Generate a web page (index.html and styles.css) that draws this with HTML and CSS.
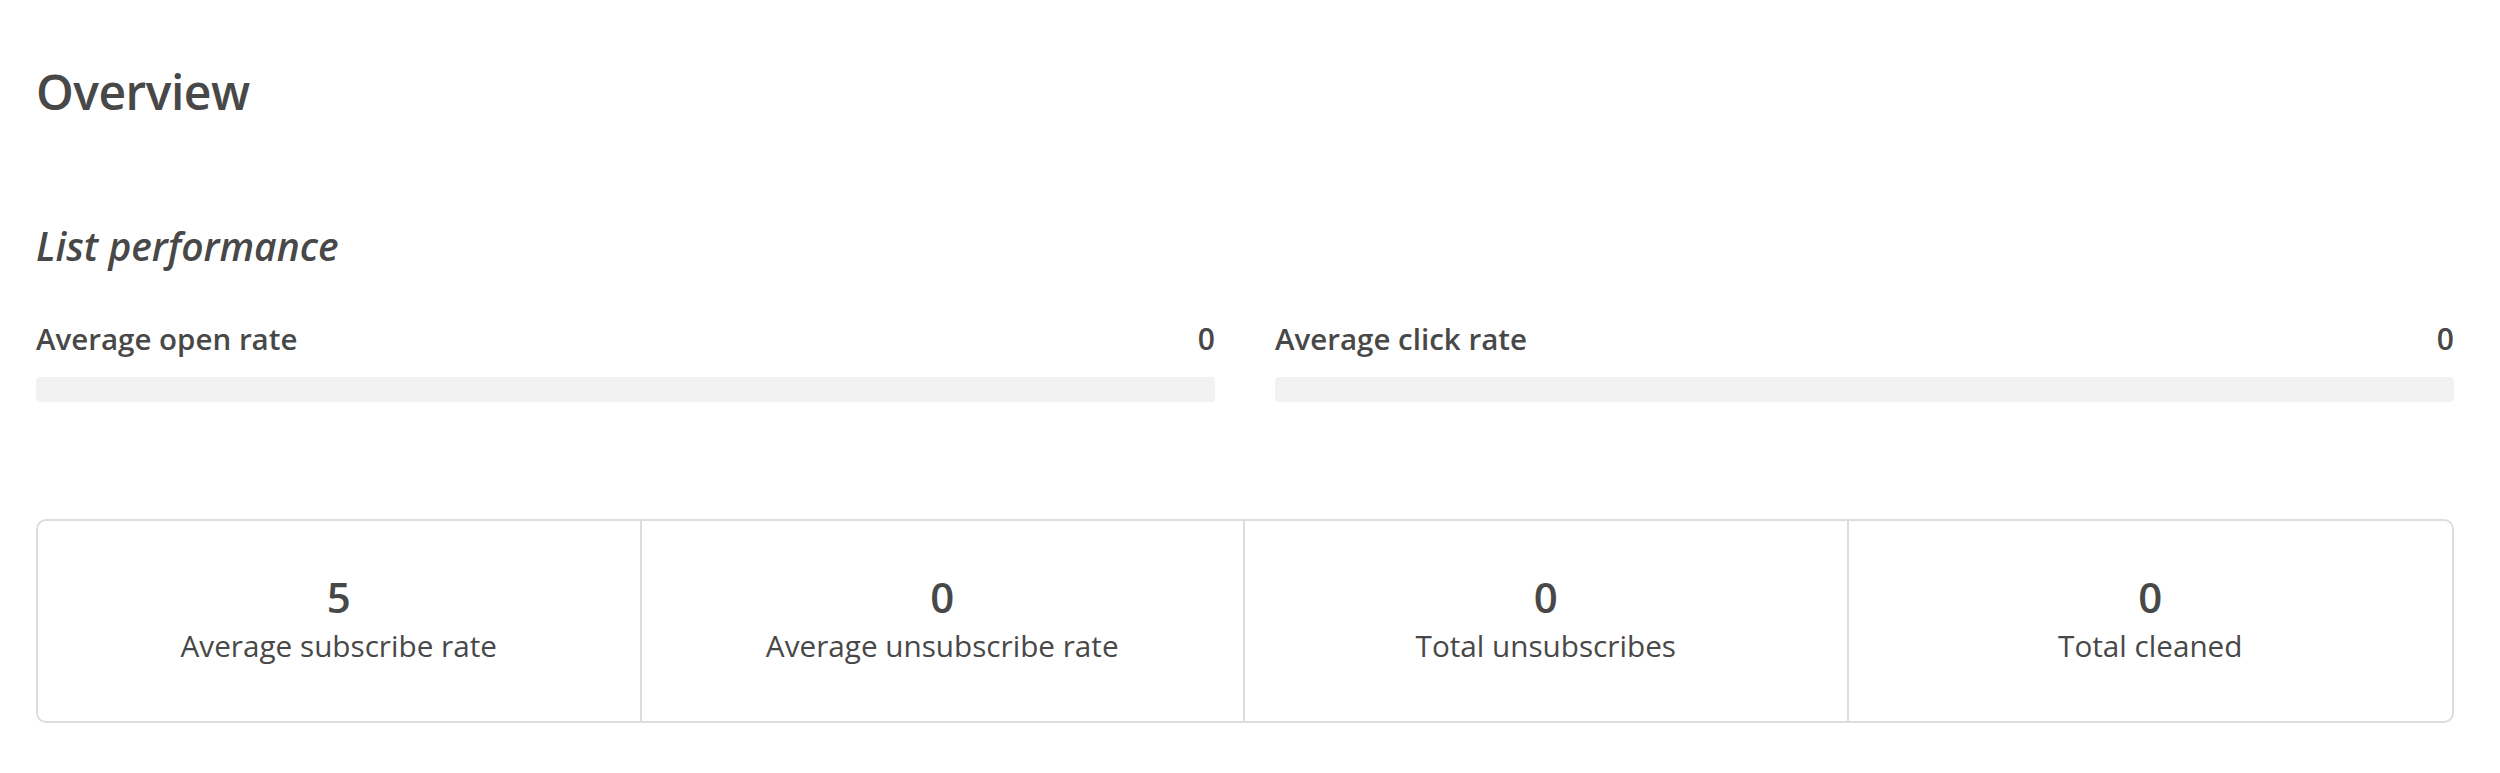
FILE: index.html
```html
<!DOCTYPE html>
<html>
<head>
<meta charset="utf-8">
<link rel="stylesheet" href="styles.css">
</head>
<body>
<main class="page">
  <h1 class="title">Overview</h1>
  <h2 class="subtitle">List performance</h2>
  <section class="rates">
    <div class="rate">
      <div class="rate-head"><span class="rate-label">Average open rate</span><span class="rate-value">0</span></div>
      <div class="bar"></div>
    </div>
    <div class="rate">
      <div class="rate-head"><span class="rate-label">Average click rate</span><span class="rate-value">0</span></div>
      <div class="bar"></div>
    </div>
  </section>
  <section class="stats">
    <div class="stat"><div class="stat-num">5</div><div class="stat-label">Average subscribe rate</div></div>
    <div class="stat"><div class="stat-num">0</div><div class="stat-label">Average unsubscribe rate</div></div>
    <div class="stat"><div class="stat-num">0</div><div class="stat-label">Total unsubscribes</div></div>
    <div class="stat"><div class="stat-num">0</div><div class="stat-label">Total cleaned</div></div>
  </section>
</main>
</body>
</html>
```

FILE: styles.css
```css
html, body {
  margin: 0;
  padding: 0;
  background: #ffffff;
}
body {
  font-family: "Open Sans", "Liberation Sans", sans-serif;
  color: #484848;
}
.page {
  padding: 63px 46px 0 36px;
}
.title {
  margin: 0;
  font-size: 48px;
  line-height: 1.2;
  font-weight: 600;
  letter-spacing: -0.5px;
}
.subtitle {
  margin: 102px 0 0 0;
  font-size: 39px;
  line-height: 1.2;
  font-weight: 600;
  font-style: italic;
}
.rates {
  display: grid;
  grid-template-columns: 1fr 1fr;
  column-gap: 60px;
  margin-top: 52px;
}
.rate-head {
  display: flex;
  justify-content: space-between;
  align-items: baseline;
  line-height: 1.2;
}
.rate-label {
  font-size: 29.5px;
  font-weight: 600;
}
.rate-value {
  font-size: 30px;
  font-weight: 600;
}
.bar {
  margin-top: 20px;
  height: 25px;
  background: #f2f2f2;
  border-radius: 4px;
}
.stats {
  display: grid;
  grid-template-columns: repeat(4, 1fr);
  margin-top: 117px;
  border: 2px solid #dddddd;
  border-radius: 10px;
  height: 204px;
  box-sizing: border-box;
}
.stat {
  display: flex;
  flex-direction: column;
  align-items: center;
  padding-top: 51px;
  border-right: 2px solid #dddddd;
}
.stat:last-child {
  border-right: none;
}
.stat-num {
  font-size: 42px;
  line-height: 1.2;
  font-weight: 600;
}
.stat-label {
  margin-top: 5px;
  font-size: 29.7px;
  line-height: 1.2;
  font-weight: 400;
}
```
